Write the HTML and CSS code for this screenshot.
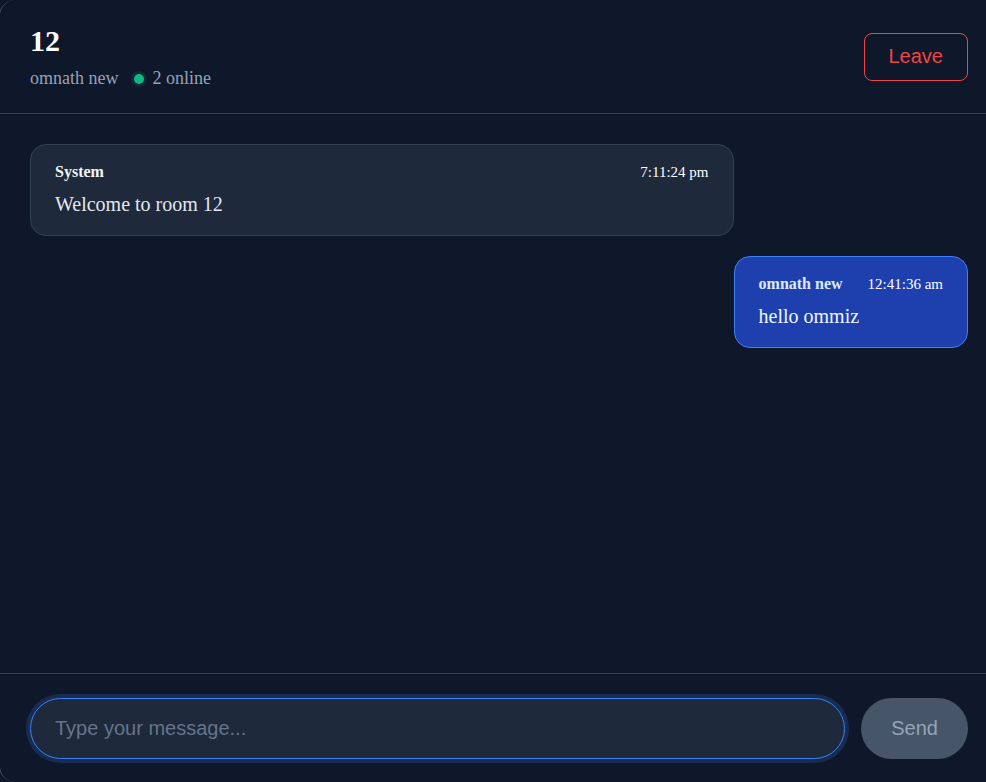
FILE: index.html
```html
<!DOCTYPE html>
<html lang="en">
<head>
<meta charset="utf-8">
<title>Room 12</title>
<link rel="stylesheet" href="styles.css">
</head>
<body>
<div class="chat">
  <header class="chat-header">
    <div class="room-info">
      <h2 class="room-title">12</h2>
      <div class="room-meta">
        <span class="user-name">omnath new</span>
        <span class="online"><span class="dot"></span>2 online</span>
      </div>
    </div>
    <button class="leave-btn">Leave</button>
  </header>
  <main class="messages">
    <div class="bubble">
      <div class="bubble-head">
        <span class="sender">System</span>
        <span class="time">7:11:24 pm</span>
      </div>
      <div class="text">Welcome to room 12</div>
    </div>
    <div class="bubble own">
      <div class="bubble-head">
        <span class="sender">omnath new</span>
        <span class="time">12:41:36 am</span>
      </div>
      <div class="text">hello ommiz</div>
    </div>
  </main>
  <footer class="composer">
    <input class="msg-input" type="text" placeholder="Type your message...">
    <button class="send-btn">Send</button>
  </footer>
</div>
</body>
</html>
```
FILE: styles.css
```css
html, body {
  margin: 0;
  padding: 0;
  background: #0f172a;
  height: 100%;
  overflow: hidden;
}
body {
  font-family: "Liberation Serif", "Times New Roman", serif;
  color: #e2e8f0;
}
.chat {
  height: 782px;
  margin-left: -1px;
  box-sizing: border-box;
  display: flex;
  flex-direction: column;
  border-left: 1px solid rgba(100, 116, 139, 0.6);
  border-radius: 16px 0 0 16px;
  background: #0f172a;
}
.chat-header {
  display: flex;
  align-items: center;
  justify-content: space-between;
  padding: 24px 18px 24px 30px;
  border-bottom: 1px solid #334155;
}
.room-title {
  margin: 0 0 10px;
  font-size: 30px;
  font-weight: 700;
  color: #ffffff;
  line-height: normal;
}
.room-meta {
  display: flex;
  align-items: center;
  gap: 16px;
  font-size: 18px;
  color: #94a3b8;
}
.online {
  display: flex;
  align-items: center;
  gap: 8px;
}
.dot {
  width: 10px;
  height: 10px;
  border-radius: 50%;
  background: #10b981;
  box-shadow: 0 0 0 3px rgba(16, 185, 129, 0.12);
}
.leave-btn {
  font-family: "Liberation Sans", Arial, sans-serif;
  font-size: 20px;
  color: #ef4444;
  background: transparent;
  border: 1px solid #ef4444;
  border-radius: 8px;
  padding: 0 24px;
  height: 48px;
}
.messages {
  flex: 1;
  display: flex;
  flex-direction: column;
  align-items: flex-start;
  gap: 20px;
  padding: 30px 18px 30px 30px;
  overflow: hidden;
}
.bubble {
  box-sizing: border-box;
  max-width: 75%;
  width: 75%;
  background: #1e293b;
  border: 1px solid #334155;
  border-radius: 16px;
  padding: 18px 24px 19px;
}
.bubble.own {
  width: auto;
  align-self: flex-end;
  background: #1e40af;
  border-color: #3b82f6;
}
.bubble-head {
  display: flex;
  justify-content: space-between;
  align-items: baseline;
  gap: 25px;
  margin-bottom: 12px;
}
.sender {
  font-size: 16px;
  font-weight: 700;
  color: #f1f5f9;
}
.own .sender {
  color: #dbeafe;
}
.time {
  font-size: 15px;
  color: #ffffff;
}
.text {
  font-size: 20px;
  color: #e2e8f0;
}
.own .text {
  color: #eff6ff;
}
.composer {
  display: flex;
  align-items: center;
  gap: 16px;
  padding: 24px 18px 23px 30px;
  border-top: 1px solid #334155;
}
.msg-input {
  flex: 1;
  font-family: "Liberation Sans", Arial, sans-serif;
  font-size: 20px;
  padding: 18px 24px;
  line-height: 23px;
  background: #1e293b;
  color: #e2e8f0;
  border: 1px solid #3b82f6;
  border-radius: 31px;
  outline: none;
  box-shadow: 0 0 0 4px rgba(59, 130, 246, 0.2);
}
.msg-input::placeholder {
  color: #64748b;
}
.send-btn {
  font-family: "Liberation Sans", Arial, sans-serif;
  font-size: 20px;
  height: 61px;
  padding: 0 30px;
  border: none;
  border-radius: 31px;
  background: #475569;
  color: #94a3b8;
}
```
